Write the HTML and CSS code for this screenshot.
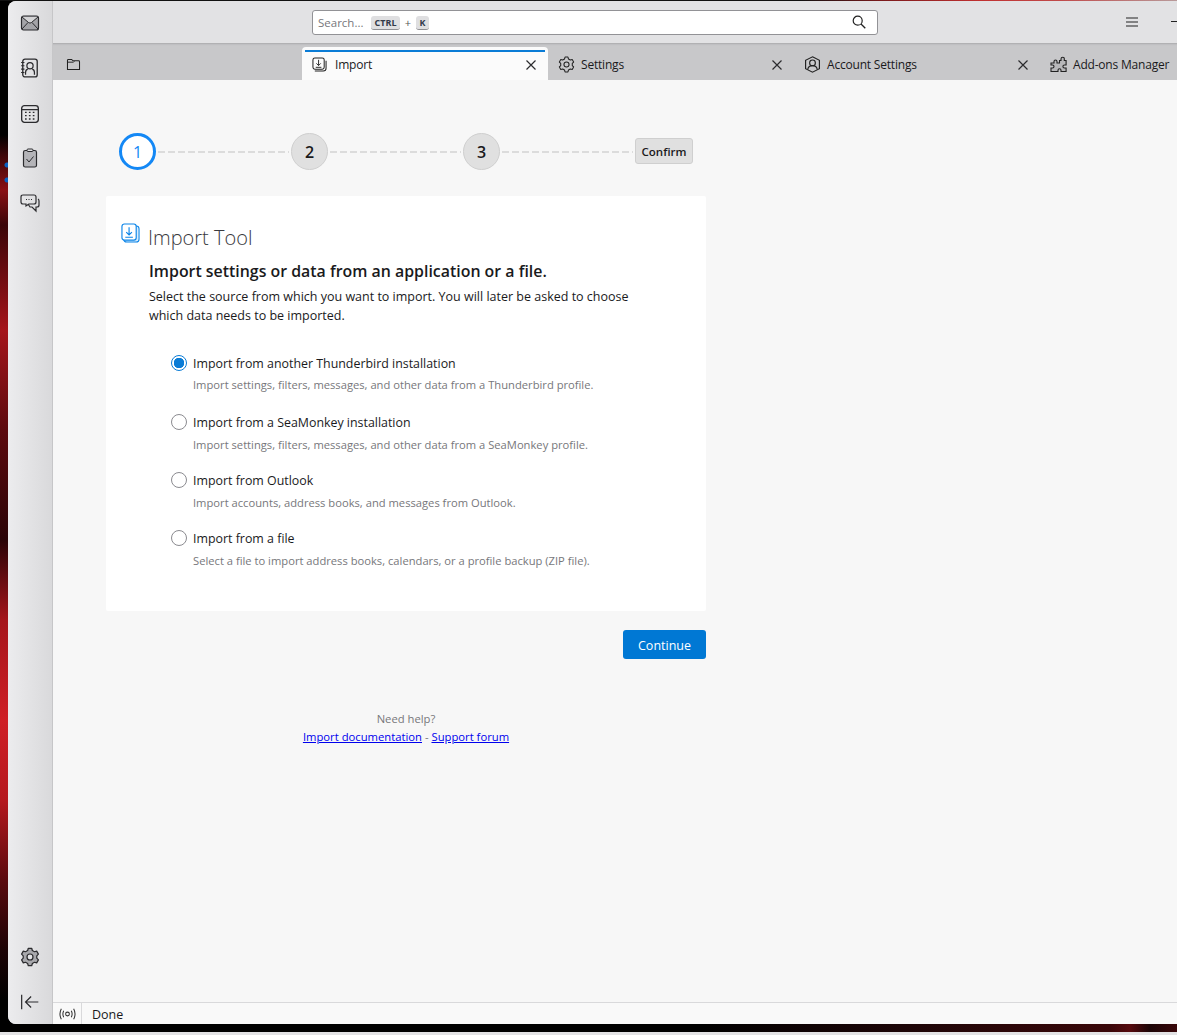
FILE: index.html
```html
<!DOCTYPE html>
<html lang="en">
<head>
<meta charset="utf-8">
<title>Import</title>
<link rel="stylesheet" href="styles.css">
</head>
<body>
<div class="top-edge"></div>
<div class="window">
  <aside class="spaces">
    <div class="spaces-top">
      <svg class="sp" viewBox="0 0 20 20"><rect x="1.500" y="3" width="17" height="14" rx="2" fill="#a4a4a8" stroke="#2b2b2e" stroke-width="1.200"/><path d="M2 4 8.500 9.500Q10 10.700 11.500 9.500L18 4" fill="#d4d4d6" stroke="#2b2b2e"/><path d="M2 16 8 9.500M18 16 12 9.500" fill="none" stroke="#2b2b2e"/></svg>
      <svg class="sp" viewBox="0 0 18 18"><rect x="2.500" y="1" width="13" height="16" rx="2" fill="none" stroke="#2b2b2e" stroke-width="1.200"/><path d="M1 4h3M1 7h3M1 10h3M1 13h3" stroke="#2b2b2e"/><circle cx="9" cy="7" r="2.800" fill="none" stroke="#2b2b2e" stroke-width="1.100"/><path d="M5 15v-2q0-2.500 2-3M13 15v-2q0-2.500-2-3" fill="none" stroke="#2b2b2e" stroke-width="1.100"/></svg>
      <svg class="sp sp-cal" viewBox="0 0 18 18"><rect x="1.500" y="1.500" width="15" height="15" rx="2.500" fill="none" stroke="#2b2b2e" stroke-width="1.200"/><path d="M1.500 5h15" stroke="#2b2b2e" stroke-width="1.200"/><path d="M4.500 7.500h1.500M8 7.500h1.500M11.500 7.500h1.500M4.500 10.500h1.500M8 10.500h1.500M11.500 10.500h1.500M4.500 13.500h1.500M8 13.500h1.500M11.500 13.500h1.500" stroke="#2b2b2e" stroke-width="1.200"/></svg>
      <svg class="sp" viewBox="0 0 18 20"><rect x="2.500" y="2.500" width="13" height="16.500" rx="1.800" fill="#b4b4b8" stroke="#2b2b2e" stroke-width="1.200"/><rect x="6" y="1" width="6" height="2.500" rx="1" fill="#e0e0e2" stroke="#2b2b2e"/><path d="m5.500 11 2.500 3 4.500-5.500" fill="none" stroke="#2b2b2e"/></svg>
      <svg class="sp" viewBox="0 0 20 20"><path d="M3 2h11q2 0 2 2v5q0 2-2 2H9l-3 2v-2H3q-2 0-2-2V4q0-2 2-2z" fill="none" stroke="#2b2b2e" stroke-width="1.200"/><path d="M18 6q1 .5 1 2v4q0 2-2 2h-1v4l-4-4h-2l-2-3" fill="none" stroke="#2b2b2e" stroke-width="1.200"/><path d="M6 6.500h1M8.500 6.500h1M11 6.500h1" stroke="#2b2b2e"/></svg>
    </div>
    <div class="spaces-bottom">
      <svg class="sp" viewBox="0 0 18 18"><path class="gear" fill="#a8a8ac" stroke="#2b2b2e" d="M6.880 3.170 7.470 1.150H10.530L11.120 3.170 12.990 4.250 15.040 3.750 16.570 6.390 15.110 7.920V10.080L16.570 11.610 15.040 14.250 12.990 13.750 11.120 14.830 10.530 16.850H7.470L6.880 14.830 5.010 13.750 2.960 14.250 1.430 11.610 2.890 10.080V7.920L1.430 6.390 2.960 3.750 5.010 4.250z"/><circle cx="9" cy="9" r="2.700" fill="#e4e4e6" stroke="#2b2b2e" stroke-width="1.100"/></svg>
      <svg class="sp" viewBox="0 0 18 18"><path d="M1.500 2.500v13M16.500 9H5M10 4 5 9l5 5" fill="none" stroke="#2b2b2e" stroke-width="1.100"/></svg>
    </div>
  </aside>
  <div class="main">
    <header class="toolbar">
      <div class="search">
        <span class="search-ph">Search...</span>
        <kbd class="key key-ctrl">CTRL</kbd><span class="plus">+</span><kbd class="key">K</kbd>
        <svg class="search-icon" viewBox="0 0 14 14"><circle cx="5.700" cy="5.700" r="4.500" fill="none" stroke="#222" stroke-width="1.200"/><path d="m9 9 4.300 4.300" stroke="#222" stroke-width="1.300"/></svg>
      </div>
      <svg class="hamburger" viewBox="0 0 12 10"><path d="M0 1h12M0 5h12M0 9h12" stroke="#222" stroke-width="1"/></svg>
      <span class="minimize"></span>
    </header>
    <nav class="tabs">
      <div class="tab-folder">
        <svg class="ti" viewBox="0 0 16 14"><path d="M1.500 12.500V2.500q0-1 1-1h3.500l1.500 1.500h6q1 0 1 1v8.500z" fill="none" stroke="#222" stroke-width="1.100"/><path d="M1.500 4.500h6.500l1-1" fill="none" stroke="#222"/></svg>
      </div>
      <div class="tab active">
        <svg class="ti" viewBox="0 0 16 16"><rect x="1" y="1" width="12" height="12" rx="2" fill="none" stroke="#222" stroke-width="1.100"/><path d="M3 15h9q3 0 3-3V4" fill="none" stroke="#222" stroke-width="1.100"/><path d="M7 3v6M4.700 6.800 7 9.100l2.300-2.300M4 11h6" fill="none" stroke="#222"/></svg>
        <span class="tab-label">Import</span>
        <svg class="close" viewBox="0 0 10 10"><path d="m.5.5 9 9M9.500.5l-9 9" stroke="#2b2b2e" stroke-width="1.200"/></svg>
      </div>
      <div class="tab">
        <svg class="ti ti-lg" viewBox="0 0 18 18"><path class="gear" fill="none" stroke="#222" d="M6.880 3.170 7.470 1.150H10.530L11.120 3.170 12.990 4.250 15.040 3.750 16.570 6.390 15.110 7.920V10.080L16.570 11.610 15.040 14.250 12.990 13.750 11.120 14.830 10.530 16.850H7.470L6.880 14.830 5.010 13.750 2.960 14.250 1.430 11.610 2.890 10.080V7.920L1.430 6.390 2.960 3.750 5.010 4.250z"/><circle cx="9" cy="9" r="2.700" fill="none" stroke="#222" stroke-width="1.100"/></svg>
        <span class="tab-label">Settings</span>
        <svg class="close" viewBox="0 0 10 10"><path d="m.5.500 9 9M9.500.5l-9 9" stroke="#2b2b2e" stroke-width="1.200"/></svg>
      </div>
      <div class="tab">
        <svg class="ti ti-lg" viewBox="0 0 16 16"><path d="M8 .8 14.500 4v8L8 15.200 1.500 12V4z" fill="none" stroke="#222" stroke-width="1.100"/><circle cx="8" cy="6.500" r="2.700" fill="none" stroke="#222" stroke-width="1.100"/><path d="M3.500 12.500q.8-3.500 4.500-3.500t4.500 3.500" fill="none" stroke="#222" stroke-width="1.100"/></svg>
        <span class="tab-label">Account Settings</span>
        <svg class="close" viewBox="0 0 10 10"><path d="m.5.500 9 9M9.500.5l-9 9" stroke="#2b2b2e" stroke-width="1.200"/></svg>
      </div>
      <div class="tab">
        <svg class="ti ti-lg" viewBox="0 0 17 17"><path d="M1 7h3V5.500q0-1.500 1.500-1.500T7 5.500V7h2.500V4.500h1.500V3q0-1.800 1.700-1.800T14.300 3v1.500h1.800V9h-1.600q-1.600 0-1.600 1.500T14.500 12h1.600v3.500H11v-1.300q0-1.500-1.500-1.500T8 14.200v1.300H1V12h1.500Q4 12 4 10.500T2.500 9H1z" fill="#b8b8ba" stroke="#222" stroke-width="1.100"/></svg>
        <span class="tab-label">Add-ons Manager</span>
      </div>
    </nav>
    <main class="content">
      <div class="wizard">
        <ol class="steps">
          <li class="step current">1</li><li class="dash"></li>
          <li class="step">2</li><li class="dash"></li>
          <li class="step">3</li><li class="dash"></li>
          <li class="confirm">Confirm</li>
        </ol>
        <section class="card">
          <div class="card-title">
            <svg class="title-icon" viewBox="0 0 20 22"><rect x="3" y="3" width="16" height="17" rx="3" fill="#d8ecfc" stroke="#0a84e8" stroke-width="1.100"/><rect x="1" y="1" width="15" height="17" rx="2.500" fill="#fff" stroke="#0a84e8" stroke-width="1.200"/><path d="M8.500 4.500v8M5.500 9.500l3 3 3-3M4.500 15h8" fill="none" stroke="#0a84e8" stroke-width="1.200"/></svg>
            <h1>Import Tool</h1>
          </div>
          <div class="card-body">
            <h2>Import settings or data from an application or a file.</h2>
            <p class="intro">Select the source from which you want to import. You will later be asked to choose which data needs to be imported.</p>
            <div class="options">
              <div class="option"><span class="radio checked"></span><div><div class="opt-label">Import from another Thunderbird installation</div><div class="opt-desc">Import settings, filters, messages, and other data from a Thunderbird profile.</div></div></div>
              <div class="option"><span class="radio"></span><div><div class="opt-label">Import from a SeaMonkey installation</div><div class="opt-desc">Import settings, filters, messages, and other data from a SeaMonkey profile.</div></div></div>
              <div class="option"><span class="radio"></span><div><div class="opt-label">Import from Outlook</div><div class="opt-desc">Import accounts, address books, and messages from Outlook.</div></div></div>
              <div class="option"><span class="radio"></span><div><div class="opt-label">Import from a file</div><div class="opt-desc">Select a file to import address books, calendars, or a profile backup (ZIP file).</div></div></div>
            </div>
          </div>
        </section>
        <div class="actions"><button class="continue">Continue</button></div>
        <footer class="help">
          <div class="need">Need help?</div>
          <div><a href="#">Import documentation</a><span class="sep"> - </span><a href="#">Support forum</a></div>
        </footer>
      </div>
    </main>
    <footer class="status">
      <span class="status-icon"><svg viewBox="0 0 18 14" class="wifi"><circle cx="9" cy="7" r="2" fill="none" stroke="#333" stroke-width="1.100"/><path d="M5 3.500q-1.800 3.500 0 7M13 3.500q1.800 3.500 0 7M2.500 1.500q-3 5.500 0 11M15.500 1.500q3 5.500 0 11" fill="none" stroke="#333" stroke-width="1.100"/></svg></span>
      <span class="status-text">Done</span>
    </footer>
  </div>
</div>
<div class="bottom-gap"></div>
<div class="bottom-strip"></div>
</body>
</html>
```
FILE: styles.css
```css
* { box-sizing: border-box; }
html, body { margin: 0; height: 100%; }
body {
  width: 1177px; height: 1035px; overflow: hidden;
  font-family: "Open Sans", "Noto Sans", sans-serif;
  font-size: 12.5px; color: #1a1a1c;
  background:
    radial-gradient(circle at 7px 165px, #0a5fc0 0 2px, transparent 3px),
    radial-gradient(circle at 7px 180px, #0a5fc0 0 2px, transparent 3px),
    linear-gradient(180deg, #000 0 135px, #3c0508 155px, #8a1015 190px, #3a0609 225px, #7c0e13 290px, #a5151b 330px, #5c0a0e 430px, #2a0407 540px, #a5151b 620px, #cf1f25 720px, #b5181e 800px, #5a0a0e 880px, #1c0305 950px, #000 1000px);
  display: flex; flex-direction: column;
}
.top-edge {
  height: 1px; flex: none;
  background: linear-gradient(90deg, #111 0 800px, #7a1a1c 880px, #c03030 980px, #c04a4a 1060px, #b89a9a 1177px);
}
.window {
  margin-left: 8px; width: 1169px; height: 1023px; flex: none;
  display: flex; border-radius: 8px 0 0 8px; overflow: hidden; background: #e2e2e4;
}
.spaces {
  width: 45px; flex: none; display: flex; flex-direction: column; justify-content: space-between;
  background: linear-gradient(90deg, #ececee, #d9d9db); border-right: 1px solid #c6c6c8;
  padding: 12px 0 12px;
}
.spaces-top, .spaces-bottom { display: flex; flex-direction: column; align-items: center; }
.spaces-top { gap: 25px; }
.spaces-bottom { gap: 25px; }
.sp { width: 20px; height: 20px; display: block; }
.sp-cal { margin: 1px 0 -1px; }
.gear { stroke-width: 1.100; stroke-linejoin: round; }
.main { flex: 1; min-width: 0; display: flex; flex-direction: column; }
.toolbar {
  height: 42px; flex: none; background: #e2e2e4; display: flex; align-items: center;
  padding-left: 259px;
}
.search {
  width: 566px; height: 25px; flex: none; background: #fff; border: 1px solid #929296; border-radius: 3px;
  display: flex; align-items: center; padding: 0 11px 0 5px; font-size: 11.5px;
}
.search-ph { color: #77777b; width: 53px; flex: none; }
.key {
  font-family: "Open Sans", sans-serif; font-weight: 700; font-size: 9px; color: #333a4a;
  background: #dfdfe1; border-radius: 3px; border-bottom: 1px solid #8f8f93;
  height: 14px; line-height: 13px; padding: 0; width: 13px; text-align: center; margin-top: 1px; flex: none;
}
.key-ctrl { width: 29px; }
.plus { color: #555; width: 16px; text-align: center; font-size: 11px; flex: none; }
.search-icon { width: 14px; height: 14px; margin-left: auto; }
.hamburger { width: 12px; height: 10px; margin-left: 248px; flex: none; }
.minimize { width: 6px; height: 1px; background: #222; margin: -2px 0 0 33px; flex: none; }
.tabs {
  height: 37px; flex: none; background: #c8c8ca; display: flex; align-items: stretch; overflow: hidden;
  box-shadow: inset 0 3px 2px -2px #a9a9ab;
}
.tab-folder { width: 249px; padding: 15px 0 0 13px; flex: none; }
.tab {
  width: 246px; flex: none; display: flex; align-items: center; padding: 6px 12px 0 10px; position: relative;
  font-size: 12px; letter-spacing: -.2px;
}
.tab.active { background: #fbfbfb; border-radius: 4px 4px 0 0; margin-top: 4px; padding-top: 2px; }
.tab.active::before { content: ""; position: absolute; left: 3px; right: 3px; top: 3px; height: 2px; background: #0a7cd6; }
.ti { width: 15px; height: 15px; flex: none; display: block; }
.ti-lg { width: 17px; height: 17px; margin-right: -2px; }
.tab-folder .ti { width: 15px; height: 13px; }
.tab-label { margin-left: 8px; flex: 1; white-space: nowrap; }
.close { width: 10px; height: 10px; flex: none; margin-top: 1px; }
.content { flex: 1; min-height: 0; background: #f7f7f7; padding: 53px 0 0 53px; }
.wizard { width: 600px; }
.steps { list-style: none; margin: 0; padding: 0 13px; display: flex; align-items: center; height: 37px; }
.step {
  width: 37px; height: 37px; flex: none; border-radius: 50%; background: #e0e0e0; border: 1px solid #cfcfcf;
  display: flex; align-items: center; justify-content: center; font-size: 16px; font-weight: 600; color: #1a1a1c;
}
.step.current { background: #fff; border: 3px solid #1488f5; color: #1488f5; font-weight: 400; }
.dash {
  flex: 1; height: 2px; margin: 0 2px;
  background: repeating-linear-gradient(90deg, #dcdcdc 0 7px, transparent 7px 10px);
}
.confirm {
  width: 58px; height: 26px; flex: none; border: 1px solid #cfcfcf; border-radius: 3px; background: #e0e0e0;
  display: flex; align-items: center; justify-content: center; font-size: 11.500px; font-weight: 600;
  margin-top: -1px;
}
.card { margin-top: 26px; height: 415px; background: #fff; border-radius: 2px; padding: 27px 15px 0; }
.card-title { display: flex; align-items: flex-start; gap: 8px; height: 31px; }
.title-icon { width: 19px; height: 21px; flex: none; }
h1 { margin: -1px 0 0; font-size: 20px; font-weight: 300; color: #3a3a3e; line-height: 31px; }
.card-body { padding-left: 28px; }
h2 { margin: 5px 0 0; font-size: 15.900px; font-weight: 600; line-height: 24px; color: #1a1a1c; }
.intro { margin: 4px 0 0; line-height: 19px; width: 490px; font-size: 12.500px; }
.options { margin-top: 29px; margin-left: 22px; display: flex; flex-direction: column; gap: 15px; }
.option { display: flex; gap: 6px; height: 43px; }
.option:first-child { height: 44px; }
.radio { width: 16px; height: 16px; border: 1px solid #8b8b90; border-radius: 50%; background: #fff; margin-top: 1px; flex: none; }
.radio.checked { border: 1.500px solid #0a7cd6; background: radial-gradient(circle, #0a7cd6 0 5px, #fff 5.500px); }
.opt-label { line-height: 20px; font-size: 12.400px; }
.opt-desc { margin-top: 3px; line-height: 18px; font-size: 11.200px; color: #77777b; }
.option:first-child .opt-desc { margin-top: 2px; }
.actions { display: flex; justify-content: flex-end; margin-top: 19px; }
.continue {
  width: 83px; height: 29px; background: #0078d4; color: #fff; border: 0; border-radius: 3px;
  padding: 1px 0 0; font: 12.500px "Open Sans", sans-serif;
}
.help { margin-top: 51px; text-align: center; font-size: 11.250px; line-height: 18px; color: #77777b; }
.help a { color: #0000ee; }
.status {
  height: 22px; flex: none; background: #f9f9f9; border-top: 1px solid #d9d9db; display: flex; align-items: stretch;
}
.status-icon { width: 29px; border-right: 1px solid #d9d9db; display: flex; align-items: center; justify-content: center; }
.wifi { width: 17px; height: 14px; }
.status-text { padding-left: 10px; line-height: 23px; }
.bottom-gap {
  flex: none; height: 8px;
  background: linear-gradient(90deg, #000 0 700px, #1c0507 900px, #3a0709 1110px, #560a0e 1130px, #1c0507 1150px, #3a0709 1177px);
}
.bottom-strip { flex: none; height: 3px; background: #e2e2e4; }
```
